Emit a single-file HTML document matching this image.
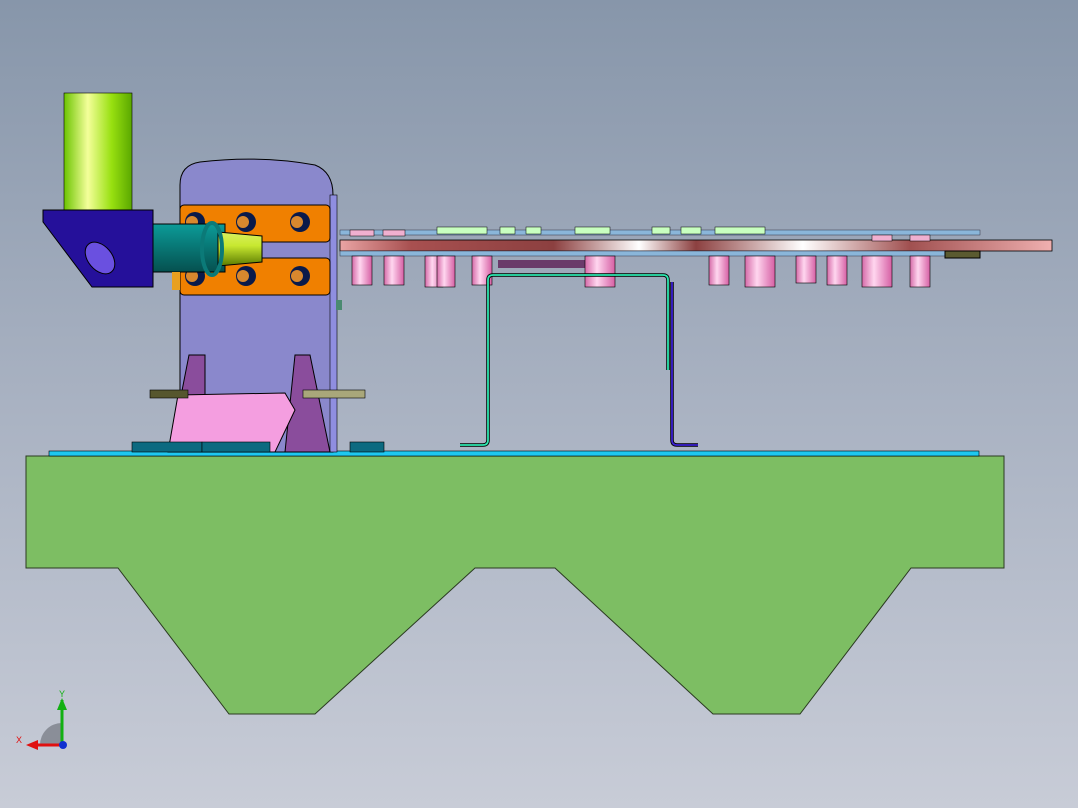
<!DOCTYPE html><html><head><style>html,body{margin:0;padding:0}body{width:1078px;height:808px;overflow:hidden;background:linear-gradient(#8796aa,#a9b2c2 50%,#c8ccd7)}svg{display:block}</style></head><body>
<svg width="1078" height="808" viewBox="0 0 1078 808" xmlns="http://www.w3.org/2000/svg">
<defs>
<linearGradient id="lime" x1="0" x2="1"><stop offset="0" stop-color="#6cc400"/><stop offset=".35" stop-color="#f4ff9a"/><stop offset=".7" stop-color="#98e010"/><stop offset="1" stop-color="#5aa800"/></linearGradient>
<linearGradient id="lime2" x1="0" y1="0" x2="0" y2="1"><stop offset="0" stop-color="#d8f060"/><stop offset=".4" stop-color="#c8e830"/><stop offset="1" stop-color="#5a7a00"/></linearGradient>
<linearGradient id="pk" x1="0" x2="1"><stop offset="0" stop-color="#d56aa8"/><stop offset=".4" stop-color="#ffd6ef"/><stop offset="1" stop-color="#d65fa4"/></linearGradient>
<linearGradient id="teal" x1="0" y1="0" x2="0" y2="1"><stop offset="0" stop-color="#0b9b98"/><stop offset="1" stop-color="#05504f"/></linearGradient>
<linearGradient id="rail" x1="0" x2="1"><stop offset="0" stop-color="#e9a4a4"/><stop offset=".1" stop-color="#a85050"/><stop offset=".3" stop-color="#8c4040"/><stop offset=".42" stop-color="#fff"/><stop offset=".5" stop-color="#8c4040"/><stop offset=".65" stop-color="#fff"/><stop offset=".8" stop-color="#a05050"/><stop offset="1" stop-color="#f0b0b0"/></linearGradient>
</defs>
<polygon points="26,456 1004,456 1004,568 911,568 800,714 713,714 555,568 475,568 315,714 229,714 118,568 26,568" fill="#7dbe63" stroke="#2a3a20" stroke-width="1"/>
<rect x="49" y="451" width="930" height="5" fill="#1ec8f0" stroke="#000" stroke-width=".6"/>
<path d="M180,452 V185 Q180,165 200,162 Q260,155 315,165 Q333,172 333,195 V452 Z" fill="#8a88cc" stroke="#000" stroke-width="1"/>
<rect x="330" y="195" width="7" height="257" fill="#8f8ee0" stroke="#000" stroke-width=".6"/>
<rect x="180" y="205" width="150" height="37" rx="4" fill="#f08000" stroke="#000"/>
<rect x="180" y="258" width="150" height="37" rx="4" fill="#f08000" stroke="#000"/>
<g fill="#0a1a4a"><circle cx="195" cy="222" r="10"/><circle cx="246" cy="222" r="10"/><circle cx="300" cy="222" r="10"/><circle cx="195" cy="276" r="10"/><circle cx="246" cy="276" r="10"/><circle cx="300" cy="276" r="10"/></g>
<g fill="#d8882e"><circle cx="192" cy="222" r="6"/><circle cx="243" cy="222" r="6"/><circle cx="297" cy="222" r="6"/><circle cx="192" cy="276" r="6"/><circle cx="243" cy="276" r="6"/><circle cx="297" cy="276" r="6"/></g>
<polygon points="189,355 205,355 205,452 170,452" fill="#8a4d9c" stroke="#000"/>
<polygon points="295,355 310,355 330,452 285,452" fill="#8a4d9c" stroke="#000"/>
<polygon points="178,395 285,393 295,410 275,452 168,452" fill="#f49ee0" stroke="#000"/>
<rect x="150" y="390" width="38" height="8" fill="#56562e" stroke="#000" stroke-width=".6"/>
<rect x="303" y="390" width="62" height="8" fill="#a9a77a" stroke="#000" stroke-width=".6"/>
<rect x="132" y="442" width="70" height="10" fill="#0c6a80" stroke="#000" stroke-width=".6"/>
<rect x="202" y="442" width="68" height="10" fill="#0c6a80" stroke="#000" stroke-width=".6"/>
<rect x="350" y="442" width="34" height="10" fill="#0c6a80" stroke="#000" stroke-width=".6"/>
<rect x="64" y="93" width="68" height="118" fill="url(#lime)" stroke="#000" stroke-width=".6"/>
<polygon points="43,210 153,210 153,287 92,287 43,222" fill="#25109a" stroke="#000"/>
<ellipse cx="100" cy="258" rx="12" ry="18" transform="rotate(-40 100 258)" fill="#6a50e0" stroke="#000"/>
<rect x="153" y="224" width="72" height="48" fill="url(#teal)" stroke="#000"/>
<path d="M218,232 L262,236 V262 L218,266 Z" fill="url(#lime2)" stroke="#000"/>
<ellipse cx="212" cy="249" rx="10" ry="26" fill="none" stroke="#0b7a78" stroke-width="4"/>
<rect x="172" y="272" width="8" height="18" fill="#e8a020"/>
<rect x="340" y="230" width="640" height="5" fill="#8ab6da" stroke="#334" stroke-width=".5"/>
<rect x="340" y="240" width="712" height="11" fill="url(#rail)" stroke="#000" stroke-width=".8"/>
<rect x="340" y="251" width="640" height="5" fill="#8ab6da" stroke="#334" stroke-width=".5"/>
<rect x="945" y="251" width="35" height="7" fill="#5a5a30" stroke="#000"/>
<rect x="498" y="260" width="105" height="8" fill="#6a3a6a"/>
<g fill="#c8ffc0" stroke="#000" stroke-width=".5">
<rect x="437" y="227" width="50" height="7"/><rect x="500" y="227" width="15" height="7"/><rect x="526" y="227" width="15" height="7"/><rect x="575" y="227" width="35" height="7"/><rect x="652" y="227" width="18" height="7"/><rect x="681" y="227" width="20" height="7"/><rect x="715" y="227" width="50" height="7"/></g>
<g fill="url(#pk)" stroke="#000" stroke-width=".6">
<rect x="352" y="256" width="20" height="29"/><rect x="384" y="256" width="20" height="29"/><rect x="425" y="256" width="18" height="31"/><rect x="437" y="256" width="18" height="31"/><rect x="472" y="256" width="20" height="29"/><rect x="585" y="256" width="30" height="31"/><rect x="709" y="256" width="20" height="29"/><rect x="745" y="256" width="30" height="31"/><rect x="796" y="256" width="20" height="27"/><rect x="827" y="256" width="20" height="29"/><rect x="862" y="256" width="30" height="31"/><rect x="910" y="256" width="20" height="31"/></g>
<g fill="#f0b0d0" stroke="#000" stroke-width=".5">
<rect x="350" y="230" width="24" height="6"/><rect x="383" y="230" width="22" height="6"/><rect x="872" y="235" width="20" height="6"/><rect x="910" y="235" width="20" height="6"/></g>
<path d="M460,445 H483 Q488,445 488,440 V280 Q488,275 493,275 H663 Q668,275 668,280 V370" fill="none" stroke="#000" stroke-width="3.5"/>
<path d="M460,445 H483 Q488,445 488,440 V280 Q488,275 493,275 H663 Q668,275 668,280 V370" fill="none" stroke="#2ee6b0" stroke-width="1.8"/>
<path d="M672,282 V440 Q672,445 677,445 H698" fill="none" stroke="#000" stroke-width="3.5"/>
<path d="M672,282 V440 Q672,445 677,445 H698" fill="none" stroke="#3a20d0" stroke-width="1.8"/>
<rect x="336" y="300" width="6" height="10" fill="#4a8a70"/>
<path d="M40,745 A22,22 0 0 1 62,723 V745 Z" fill="#8a8e98"/>
<line x1="62" y1="745" x2="62" y2="700" stroke="#12b012" stroke-width="3"/>
<polygon points="57,710 62,698 67,710" fill="#12b012"/>
<line x1="62" y1="745" x2="30" y2="745" stroke="#e01010" stroke-width="3"/>
<polygon points="38,740 26,745 38,750" fill="#e01010"/>
<circle cx="63" cy="745" r="4" fill="#1030d0"/>
<text x="59" y="697" font-family="Liberation Sans,sans-serif" font-size="9" fill="#12b012">Y</text>
<text x="16" y="743" font-family="Liberation Sans,sans-serif" font-size="9" fill="#e01010">X</text>
</svg>
</body></html>
